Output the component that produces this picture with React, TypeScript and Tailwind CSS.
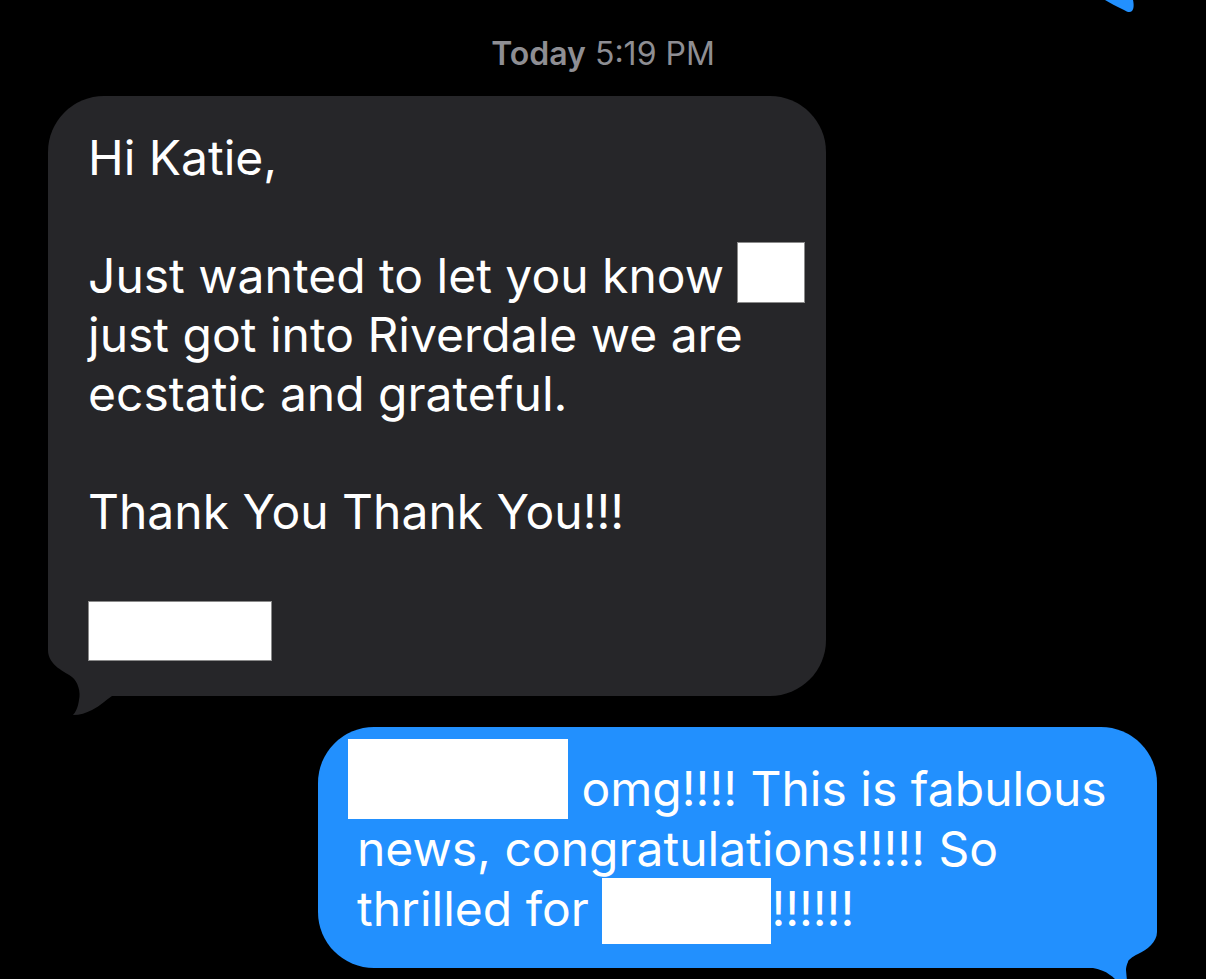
import React from "react";

// chat thread: one incoming (gray) and one outgoing (blue) bubble
const Redacted = ({ className }: { className: string }) => (
  <span className={`inline-block bg-white ${className}`} />
);

const App = () => {
  return (
    <div className="relative h-[979px] w-[1206px] overflow-hidden bg-black font-['Inter','Liberation_Sans',sans-serif] antialiased">
      {/* tail of the previous outgoing bubble, cut off at the top */}
      <div className="flex h-[14px] justify-end pr-[66px]">
        <svg width="40" height="14" viewBox="0 0 40 14">
          <path
            d="M5,0 L33,0 C34,4 34,9 32,11 C30,13 27,12 24,10 C16,6 10,3 5,0 Z"
            fill="#2290fe"
          />
        </svg>
      </div>

      <p className="mt-[22px] text-center text-[32px] leading-[36px] text-[#8e8e93]">
        <span className="font-semibold">Today</span> 5:19 PM
      </p>

      <div className="relative ml-[48px] mt-[24px] w-[778px] rounded-[56px] rounded-bl-[80px] bg-[#262629] pb-[35px] pl-[40px] pr-[20px] pt-[32px] text-[48px] leading-[59px] text-white">
        <svg
          className="pointer-events-none absolute -bottom-[20px] left-0"
          width="100"
          height="100"
          viewBox="0 0 100 100"
        >
          <path
            d="M0,0 L0,34 C0,50 18,56 24,61 C30,66 33,76 31,84 C30,92 27,97 25,99 C32,99 38,97 44,94 C52,90 58,84 64,80 L100,80 L100,0 Z"
            fill="#262629"
          />
        </svg>
        <div className="relative whitespace-nowrap">
          Hi Katie,
          <br />
          <br />
          Just wanted to let you know{" "}
          <Redacted className="-mt-[4px] h-[61px] w-[68px] border border-[#8a8a8a] align-[-10px]" />
          <br />
          just got into Riverdale we are
          <br />
          ecstatic and grateful.
          <br />
          <br />
          Thank You Thank You!!!
        </div>
        <div className="relative mt-[60px] h-[60px] w-[184px] border border-[#8a8a8a] bg-white" />
      </div>

      <div className="relative ml-[318px] mt-[31px] w-[839px] rounded-[56px] rounded-br-[80px] bg-[#2290fe] pb-[30px] pl-[39px] pr-[20px] pt-[32px] text-[48px] leading-[59px] text-white">
        <svg
          className="pointer-events-none absolute -bottom-[30px] right-0"
          width="100"
          height="120"
          viewBox="0 -20 100 120"
        >
          <path
            d="M100,-20 L100,34 C100,44 90,52 81,56 C75,59 71,62 71,64 C69,68 69,72 69,72 L70,83 C71,88 74,91 76,92 C70,90 64,86 60,83 C57,80 55,78 53,77 C48,73 42,71 36,70 L0,70 L0,-20 Z"
            fill="#2290fe"
          />
        </svg>
        <div className="relative whitespace-nowrap">
          <Redacted className="-ml-[9px] -mt-[20px] h-[80px] w-[220px] align-[-13px]" />{" "}
          omg!!!! This is fabulous
          <br />
          news, congratulations!!!!! So
          <br />
          thrilled for{" "}
          <Redacted className="-mb-[6px] h-[66px] w-[169px] align-[-12px]" />
          !!!!!!
        </div>
      </div>
    </div>
  );
};

export default App;
